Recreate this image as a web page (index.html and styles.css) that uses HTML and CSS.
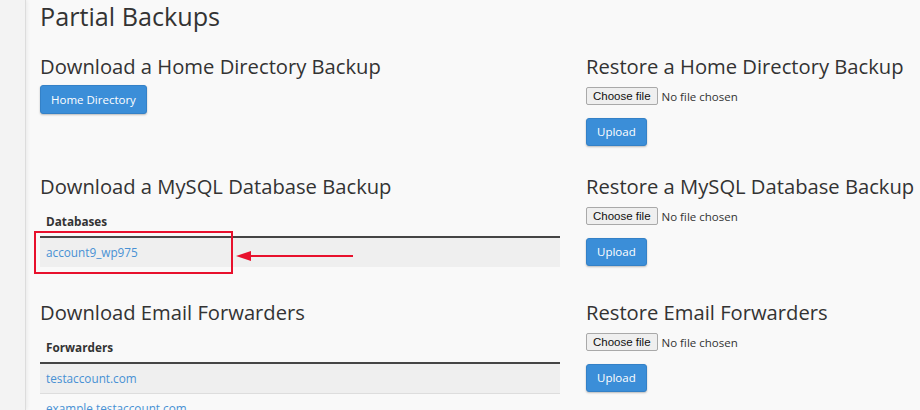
FILE: index.html
```html
<!DOCTYPE html>
<html lang="en">
<head>
<meta charset="utf-8">
<title>Partial Backups</title>
<link rel="stylesheet" href="styles.css">
</head>
<body>
<div class="app">
  <aside class="sidebar"></aside>
  <main class="content">
    <h1 class="page-title">Partial Backups</h1>
    <div class="grid">
      <section class="cell">
        <h2 class="section-title">Download a Home Directory Backup</h2>
        <button class="btn btn-home" type="button">Home Directory</button>
      </section>
      <section class="cell">
        <h2 class="section-title">Restore a Home Directory Backup</h2>
        <div class="file"><span class="file-btn">Choose file</span><span class="file-name">No file chosen</span></div>
        <button class="btn btn-upload" type="button">Upload</button>
      </section>

      <section class="cell">
        <h2 class="section-title">Download a MySQL Database Backup</h2>
        <table class="data-table">
          <thead><tr><th>Databases</th></tr></thead>
          <tbody><tr><td><a href="#">account9_wp975</a></td></tr></tbody>
        </table>
        <div class="annot-box"></div>
        <svg class="annot-arrow" width="117" height="12" viewBox="0 0 117 12">
          <polygon points="0,6 15,1 15,11" fill="#e8112d"/>
          <rect x="13" y="5" width="104" height="2" fill="#e8112d"/>
        </svg>
      </section>
      <section class="cell">
        <h2 class="section-title">Restore a MySQL Database Backup</h2>
        <div class="file"><span class="file-btn">Choose file</span><span class="file-name">No file chosen</span></div>
        <button class="btn btn-upload" type="button">Upload</button>
      </section>

      <section class="cell">
        <h2 class="section-title">Download Email Forwarders</h2>
        <table class="data-table">
          <thead><tr><th>Forwarders</th></tr></thead>
          <tbody>
            <tr><td><a href="#">testaccount.com</a></td></tr>
            <tr><td><a href="#">example.testaccount.com</a></td></tr>
          </tbody>
        </table>
      </section>
      <section class="cell">
        <h2 class="section-title">Restore Email Forwarders</h2>
        <div class="file"><span class="file-btn">Choose file</span><span class="file-name">No file chosen</span></div>
        <button class="btn btn-upload" type="button">Upload</button>
      </section>
    </div>
  </main>
</div>
</body>
</html>
```

FILE: styles.css
```css
html, body {
  margin: 0;
  height: 410px;
  overflow: hidden;
}
body {
  background: #f9f9f9;
  font-family: "Open Sans", "DejaVu Sans", sans-serif;
  color: #333;
}
.app {
  display: flex;
  height: 410px;
}
.sidebar {
  flex: none;
  width: 25px;
  background: #f3f3f3;
  border-right: 1px solid #dcdcdc;
  box-shadow: 1px 0 4px rgba(0, 0, 0, 0.07);
}
.content {
  flex: 1;
  min-width: 0;
  padding: 1px 0 0 14px;
}
.page-title {
  margin: 0;
  font-size: 25.2px;
  font-weight: 400;
  line-height: 30px;
}
.grid {
  display: grid;
  grid-template-columns: 520px 1fr;
  column-gap: 26px;
  row-gap: 26px;
  margin-top: 21px;
}
.cell {
  position: relative;
  min-width: 0;
  display: flex;
  flex-direction: column;
  align-items: flex-start;
}
.section-title {
  margin: 0;
  font-size: 20.2px;
  font-weight: 400;
  line-height: 28px;
  white-space: nowrap;
}
.btn {
  box-sizing: border-box;
  height: 28px;
  padding: 0 10px;
  font-family: "Open Sans", sans-serif;
  font-size: 11.5px;
  line-height: 26px;
  color: #fff;
  background: #3b8ed8;
  border: 1px solid #3481c7;
  border-radius: 3px;
  box-shadow: 0 1px 2px rgba(0, 0, 0, 0.25);
}
.btn-home {
  margin-top: 5px;
  height: 29px;
}
.btn-upload {
  margin-top: 13px;
}
.file {
  display: flex;
  align-items: center;
  margin-top: 7px;
  height: 18px;
}
.file-btn {
  box-sizing: border-box;
  height: 18px;
  padding: 0 6px;
  font-family: "Liberation Sans", Arial, sans-serif;
  font-size: 11.5px;
  line-height: 16px;
  color: #111;
  background: #efefef;
  border: 1px solid #a9a9a9;
  border-radius: 2px;
}
.file-name {
  margin-left: 4px;
  font-size: 11.5px;
  color: #333;
}
.data-table {
  width: 100%;
  border-collapse: collapse;
  font-size: 11.75px;
  margin-bottom: 5px;
}
.data-table th {
  text-align: left;
  font-weight: 700;
  line-height: 18px;
  padding: 12px 6px 6px;
  border-bottom: 2px solid #454545;
}
.data-table td {
  line-height: 18px;
  padding: 5px 6px 6px;
  border-top: 1px solid #dddddd;
}
.data-table tbody tr:nth-child(odd) td {
  background: #efefef;
}
.data-table a {
  color: #4891d4;
  text-decoration: none;
}
.annot-box {
  position: absolute;
  left: -6px;
  top: 59px;
  width: 199px;
  height: 43px;
  box-sizing: border-box;
  border: 2px solid #e8112d;
}
.annot-arrow {
  position: absolute;
  left: 196px;
  top: 78px;
}
```
